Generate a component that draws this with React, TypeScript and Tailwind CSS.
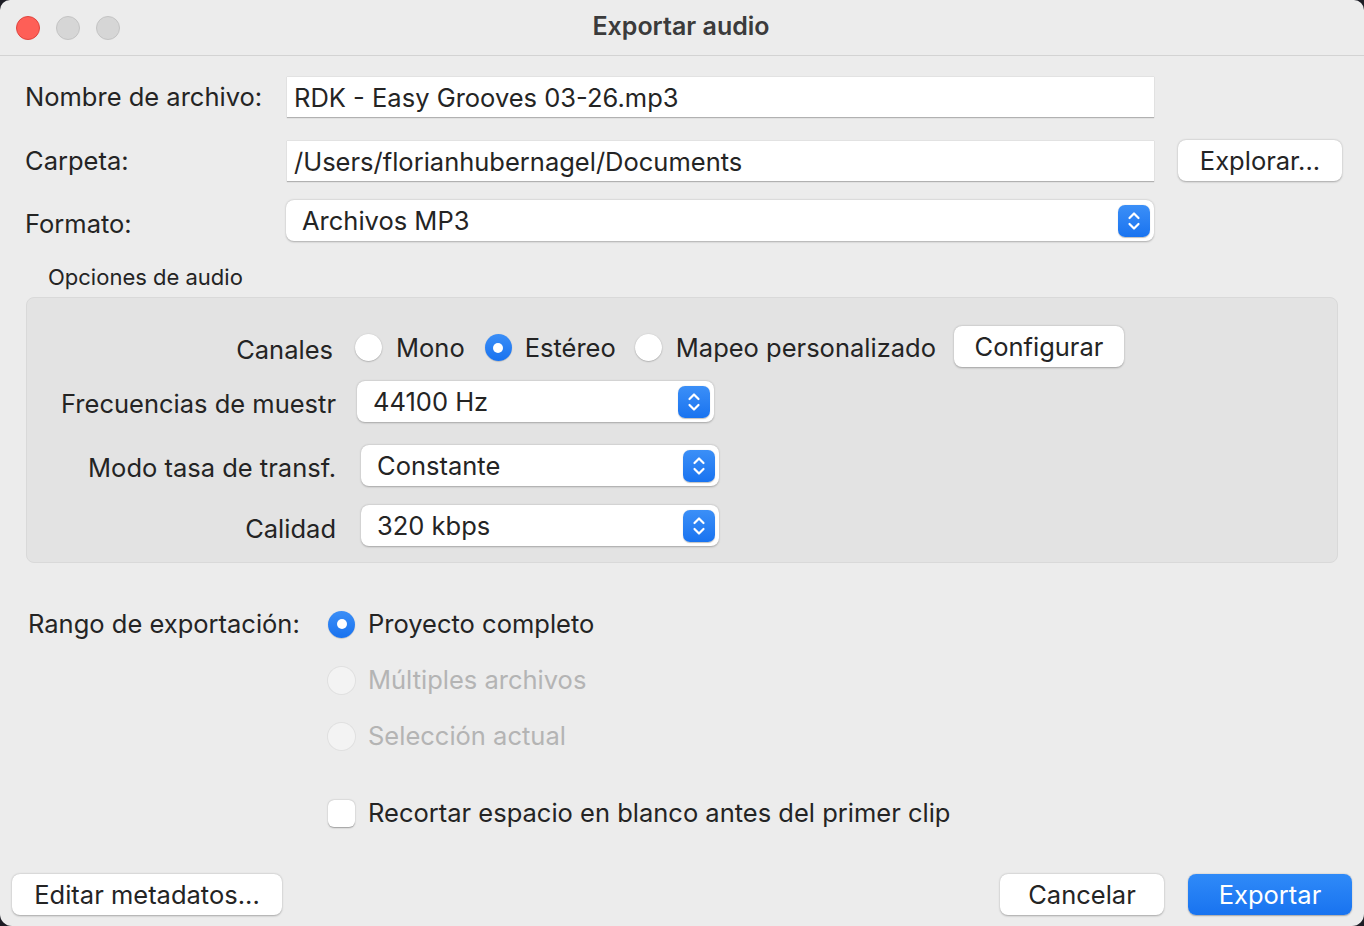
import { ReactNode } from 'react'

// small blue up/down stepper used by every popup select
const Stepper = () => (
  <div className="w-[32px] h-[32px] rounded-[7px] bg-gradient-to-b from-[#3b8ff7] to-[#1873f0] flex items-center justify-center shadow-[0_0.5px_1px_rgba(0,0,0,0.25)]">
    <svg width="14" height="22" viewBox="0 0 14 22" fill="none" stroke="white" strokeWidth="2.2" strokeLinecap="round" strokeLinejoin="round">
      <path d="M2.5 8 L7 3.5 L11.5 8" />
      <path d="M2.5 14 L7 18.5 L11.5 14" />
    </svg>
  </div>
)

const Select = ({ value, className }: { value: string; className: string }) => (
  <div className={`h-[41px] bg-white rounded-[8px] flex items-center justify-between pl-[16px] pr-[4px] shadow-[0_0.5px_2px_rgba(0,0,0,0.28)] ${className}`}>
    <span>{value}</span>
    <Stepper />
  </div>
)

const Button = ({ children, className }: { children: ReactNode; className: string }) => (
  <div className={`h-[41px] bg-white rounded-[8px] flex items-center justify-center shadow-[0_0.5px_2px_rgba(0,0,0,0.3)] ${className}`}>
    {children}
  </div>
)

const Radio = ({ checked, disabled }: { checked?: boolean; disabled?: boolean }) => {
  if (checked)
    return (
      <div className="w-[27px] h-[27px] rounded-full bg-gradient-to-b from-[#3a8ef7] to-[#1872ef] flex items-center justify-center shadow-[0_0.5px_1px_rgba(0,0,0,0.3)]">
        <div className="w-[10px] h-[10px] rounded-full bg-white" />
      </div>
    )
  return (
    <div
      className={`w-[27px] h-[27px] rounded-full ${
        disabled ? 'bg-[#f3f3f3] shadow-[0_0_0_1px_rgba(0,0,0,0.05)]' : 'bg-white shadow-[0_0.5px_1.5px_rgba(0,0,0,0.35)]'
      }`}
    />
  )
}

const TextField = ({ value }: { value: string }) => (
  <div className="w-[867px] h-[41px] bg-white flex items-center pl-[7px] pt-[2px] shadow-[0_1px_1px_rgba(0,0,0,0.25)] border-t border-[#e2e2e2]">
    {value}
  </div>
)

export default function App() {
  return (
    <div className="w-[1364px] h-[926px] bg-[#1d1d25] text-[#242424] text-[25.5px] leading-[30px]" style={{ fontFamily: 'Inter, "Noto Sans", sans-serif' }}>
      <div className="w-full h-full bg-[#ececec] rounded-b-[12px] rounded-t-[10px] flex flex-col">
        {/* title bar */}
        <div className="h-[56px] border-b border-[#d3d3d3] flex items-center shrink-0">
          <div className="flex gap-[16px] pl-[16px]">
            <div className="w-[24px] h-[24px] rounded-full bg-[#fe5f57] border border-[#e0443e]" />
            <div className="w-[24px] h-[24px] rounded-full bg-[#d6d6d6] border border-[#c4c4c4]" />
            <div className="w-[24px] h-[24px] rounded-full bg-[#d6d6d6] border border-[#c4c4c4]" />
          </div>
          <div className="flex-1 text-center font-semibold text-[#3b3b3b] text-[25px] pr-[122px] -mt-[4px]">Exportar audio</div>
        </div>

        {/* file name / folder / format */}
        <div className="flex items-center mt-[20px]">
          <div className="w-[287px] pl-[25px]">Nombre de archivo:</div>
          <TextField value="RDK - Easy Grooves 03-26.mp3" />
        </div>
        <div className="flex items-center mt-[23px]">
          <div className="w-[287px] pl-[25px]">Carpeta:</div>
          <TextField value="/Users/florianhubernagel/Documents" />
          <Button className="w-[164px] ml-[24px]">Explorar...</Button>
        </div>
        <div className="flex items-center mt-[19px]">
          <div className="w-[286px] pl-[25px] pt-[6px]">Formato:</div>
          <Select value="Archivos MP3" className="w-[868px]" />
        </div>

        {/* audio options */}
        <div className="pl-[48px] mt-[23px] text-[22px] leading-[26px]">Opciones de audio</div>
        <div className="mx-[26px] mt-[7px] h-[266px] bg-[#e3e3e3] border border-[#d9d9d9] rounded-[8px] pt-[29px] flex flex-col">
          <div className="flex items-center h-[41px]">
            <div className="w-[306px] text-right pt-[4px]">Canales</div>
            <div className="flex items-center ml-[22px]">
              <Radio />
              <span className="ml-[14px]">Mono</span>
              <div className="ml-[20px]"><Radio checked /></div>
              <span className="ml-[13px]">Estéreo</span>
              <div className="ml-[19px]"><Radio /></div>
              <span className="ml-[14px]">Mapeo personalizado</span>
              <Button className="w-[170px] ml-[18px] -mt-[2px]">Configurar</Button>
            </div>
          </div>
          <div className="flex items-center mt-[13px]">
            <div className="w-[309px] text-right pt-[5px]">Frecuencias de muestr</div>
            <Select value="44100 Hz" className="w-[357px] ml-[21px]" />
          </div>
          <div className="flex items-center mt-[23px]">
            <div className="w-[309px] text-right pt-[5px]">Modo tasa de transf.</div>
            <Select value="Constante" className="w-[358px] ml-[25px]" />
          </div>
          <div className="flex items-center mt-[19px]">
            <div className="w-[309px] text-right pt-[6px]">Calidad</div>
            <Select value="320 kbps" className="w-[358px] ml-[25px]" />
          </div>
        </div>

        {/* export range */}
        <div className="flex mt-[47px]">
          <div className="w-[328px] pl-[28px] h-[28px] flex items-center">Rango de exportación:</div>
          <div className="flex flex-col gap-[28px]">
            <div className="flex items-center h-[28px] gap-[13px]">
              <Radio checked />
              <span>Proyecto completo</span>
            </div>
            <div className="flex items-center h-[28px] gap-[13px] text-[#b4b4b4]">
              <Radio disabled />
              <span>Múltiples archivos</span>
            </div>
            <div className="flex items-center h-[28px] gap-[13px] text-[#b4b4b4]">
              <Radio disabled />
              <span>Selección actual</span>
            </div>
            <div className="flex items-center h-[28px] gap-[13px] mt-[21px]">
              <div className="w-[27px] h-[27px] rounded-[6px] bg-white shadow-[0_0.5px_1.5px_rgba(0,0,0,0.35)]" />
              <span>Recortar espacio en blanco antes del primer clip</span>
            </div>
          </div>
        </div>

        {/* footer buttons */}
        <div className="mt-auto flex items-center px-[12px] pb-[11px]">
          <Button className="w-[270px]">Editar metadatos...</Button>
          <div className="flex-1" />
          <Button className="w-[164px]">Cancelar</Button>
          <div className="w-[164px] h-[41px] ml-[24px] rounded-[8px] bg-gradient-to-b from-[#2f8af8] to-[#1873f0] text-white flex items-center justify-center shadow-[0_0.5px_1.5px_rgba(0,0,0,0.3)]">
            Exportar
          </div>
        </div>
      </div>
    </div>
  )
}
